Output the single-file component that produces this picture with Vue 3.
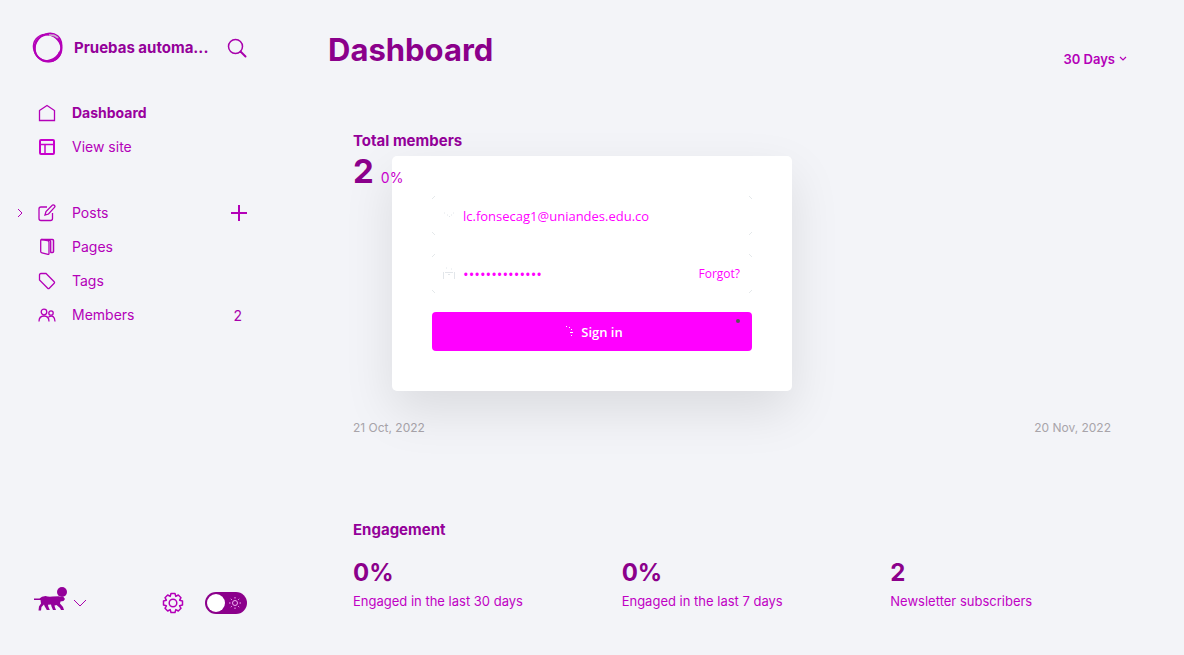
<script setup>
import { ref } from 'vue'

const email = ref('lc.fonsecag1@uniandes.edu.co')
const password = ref('contrasenia123')
const night = ref(false)

const stats = [
  { value: '0%', label: 'Engaged in the last 30 days' },
  { value: '0%', label: 'Engaged in the last 7 days' },
  { value: '2', label: 'Newsletter subscribers' },
]
</script>

<template>
  <div class="app">
    <aside class="sidebar">
      <header class="brand">
        <svg class="logo" viewBox="0 0 32 32" width="32" height="32" fill="none" stroke="#b400b8">
          <circle cx="16" cy="16" r="13.5" stroke-width="2" />
          <ellipse cx="17" cy="15.5" rx="14.5" ry="12.5" transform="rotate(-50 16 16)" stroke-width="1.5" />
          <ellipse cx="15.5" cy="16.5" rx="14.5" ry="13" transform="rotate(40 16 16)" stroke-width="1.3" />
          <path d="M28 20q-2 7-9 9" stroke-width="2.500" />
          <path d="M17 3c4-.5 7 1 9 3" stroke="#c8b4cc" stroke-width="1.500" />
        </svg>
        <span class="site">Pruebas automa...</span>
        <button class="icon-btn" type="button" aria-label="Search">
          <svg viewBox="0 0 20 20" width="20" height="20" fill="none" stroke="#a800ac" stroke-width="1.5">
            <circle cx="8.5" cy="8.5" r="7" />
            <path d="M13.5 13.5l5 5" stroke-width="2" stroke-linecap="round" />
          </svg>
        </button>
      </header>

      <nav class="nav">
        <ul>
          <li>
            <a href="#dashboard" class="active">
              <svg viewBox="0 0 18 18" width="18" height="18"><path d="M1.5 6.5L9 1.5l7.500 5v10h-15z" /></svg>
              Dashboard
            </a>
          </li>
          <li>
            <a href="#site">
              <svg viewBox="0 0 18 18" width="18" height="18" class="heavy"><rect x="2" y="2" width="14" height="14" rx="1" /><path d="M2 6.500h14M7 6v10" stroke-width="1.500" /></svg>
              View site
            </a>
          </li>
        </ul>
        <ul>
          <li>
            <svg class="expand" viewBox="0 0 6 10" width="6" height="10"><path d="M1 1l4 4-4 4" /></svg>
            <a href="#posts">
              <svg viewBox="0 0 18 18" width="18" height="18"><path d="M9 3H3a2 2 0 0 0-2 2v9.500a2 2 0 0 0 2 2h9.500a2 2 0 0 0 2-2V9M7 11l1-3.500L14.500 1q1.200-.5 2 .5t.2 1.600L10.500 10z" /></svg>
              Posts
            </a>
            <button class="icon-btn" type="button" aria-label="New post">
              <svg viewBox="0 0 16 16" width="16" height="16"><path d="M8 0v16M0 8h16" stroke-width="2" /></svg>
            </button>
          </li>
          <li>
            <a href="#pages">
              <svg viewBox="0 0 18 18" width="18" height="18"><path d="M3.500 1.500h11q1 0 1 1v11q0 1-1 1h-2" stroke-width="1.500" /><path d="M3.500 1.500l6 1.200q1.500.3 1.500 1.500v11.300q0 1-1 .8l-6-1.500q-1.300-.3-1.300-1.300v-11q0-1 .8-1zM10 1.800q2.700.3 2.700 2v11" /></svg>
              Pages
            </a>
          </li>
          <li>
            <a href="#tags">
              <svg viewBox="0 0 18 18" width="18" height="18"><path d="M1.500 3q0-1.500 1.500-1.500h5L16.200 9.700q.8.800 0 1.600l-4.900 4.900q-.8.800-1.600 0L1.500 8z" /></svg>
              Tags
            </a>
          </li>
          <li>
            <a href="#members">
              <svg viewBox="0 0 18 18" width="18" height="18"><circle cx="6" cy="6" r="2.800" /><circle cx="13" cy="7" r="2.200" /><path d="M1 15.500q0-5.500 5-5.500t5 5.500M10.500 11q6-3 6.500 4.500" /></svg>
              Members
            </a>
            <span class="count">2</span>
          </li>
        </ul>
      </nav>

      <footer class="account">
        <button class="icon-btn user" type="button" aria-label="Account">
          <svg viewBox="0 0 34 26" width="34" height="26" fill="#94009a">
            <circle cx="28" cy="6" r="5" />
            <path d="M0 12.500h5.500q2-2.500 6-2.500 3 1 7 .5l6-.3 3 .8h2l1.500 2-1.500 2-3 .5-.5 2 3 3.500 1 3h-3l-1-2-3.500-3-2 .5.500 2 1 2.500h-3l-1.500-3.500-.5-2-3 .3.300 1.700 1.500 3.500h-3L10.500 20l-.5-1.500-2.500 2.500-.5 3.500H4.500l.5-4 2-3-.5-3.500H0z" />
          </svg>
          <svg viewBox="0 0 14 9" width="14" height="9" fill="none" stroke="#a800ac"><path d="M1 1l6 6 6-6" /></svg>
        </button>
        <button class="icon-btn gear" type="button" aria-label="Settings">
          <svg viewBox="0 0 22 22" width="22" height="22" fill="none" stroke="#b400b8" stroke-width="1.500" stroke-linejoin="round">
            <path d="M9 1.500h4l.8 2.900 2.500-1.400 2.700 2.700-1.400 2.500 2.900.8v4l-2.900.8 1.400 2.500-2.700 2.700-2.500-1.400-.8 2.900H9l-.8-2.900L5.700 19 3 16.300l1.400-2.500-2.900-.8V9l2.900-.8L3 5.700 5.700 3l2.500 1.400z" />
            <circle cx="11" cy="11" r="3.800" />
          </svg>
        </button>
        <label class="toggle">
          <input v-model="night" type="checkbox" aria-label="Night shift" />
          <span class="knob"></span>
          <svg viewBox="0 0 12 12" width="12" height="12" fill="none" stroke="#efb0f2">
            <circle cx="6" cy="6" r="2.500" />
            <path d="M6 0v1.500M6 10.500V12M0 6h1.500M10.500 6H12M1.800 1.800l1 1M9.200 9.200l1 1M1.800 10.200l1-1M9.200 2.800l1-1" />
          </svg>
        </label>
      </footer>
    </aside>

    <main class="main">
      <header class="top">
        <h1>Dashboard</h1>
        <button class="period" type="button">
          30 Days
          <svg viewBox="0 0 8 6" width="8" height="6" fill="none" stroke="#b400b8" stroke-width="1.200"><path d="M1 1l3 3 3-3" /></svg>
        </button>
      </header>

      <section class="members">
        <h2>Total members</h2>
        <p class="total"><strong>2</strong><span>0%</span></p>
        <div class="chart"></div>
        <div class="dates"><span>21 Oct, 2022</span><span>20 Nov, 2022</span></div>
      </section>

      <section class="engagement">
        <h2>Engagement</h2>
        <div class="stats">
          <div v-for="s in stats" :key="s.label">
            <strong>{{ s.value }}</strong>
            <p>{{ s.label }}</p>
          </div>
        </div>
      </section>
    </main>

    <form class="signin" @submit.prevent>
      <div class="field">
        <svg viewBox="0 0 14 14" width="14" height="14"><path d="M2 4h1M7 7.500h1M11 4h1M5 6h1M9 6h1" /></svg>
        <input v-model="email" type="email" aria-label="Email address" />
      </div>
      <div class="field">
        <svg viewBox="0 0 14 14" width="14" height="14"><path d="M1.500 5v7M12.500 5v7M3 5.500h8M6 7.500h2M4 1h1M9 2h1" /></svg>
        <input v-model="password" class="secret" type="password" aria-label="Password" />
        <button class="forgot" type="button">Forgot?</button>
      </div>
      <button class="submit" type="submit">
        <svg class="spinner" viewBox="0 0 10 12" width="10" height="12" fill="none" stroke="#fff"><path d="M3 .5h1M6 1.500h1M8 3.500h1M7 6.500h3M8 9.500h1" /></svg>
        Sign in
        <span class="dot"></span>
      </button>
    </form>
  </div>
</template>

<style>
body {
  background: #f3f4f8;
}
</style>

<style scoped>
* {
  box-sizing: border-box;
}

.app {
  position: relative;
  display: flex;
  min-height: 100vh;
  overflow: hidden;
  background: #f3f4f8;
  color: #a800ac;
  font-family: Inter, "Liberation Sans", sans-serif;
  font-size: 14px;
}

h1, h2, p, ul {
  margin: 0;
  padding: 0;
}

ul {
  list-style: none;
}

button {
  padding: 0;
  border: 0;
  background: none;
  color: inherit;
  font: inherit;
  cursor: pointer;
}

.icon-btn {
  display: flex;
  align-items: center;
}

.sidebar {
  display: flex;
  flex: 0 0 280px;
  flex-direction: column;
  padding: 32px 32px 35px;
}

.brand {
  display: flex;
  align-items: center;
  gap: 10px;
  height: 32px;
}

.logo {
  flex: none;
}

.site {
  color: #94009a;
  font-size: 15px;
  font-weight: 700;
  line-height: 18px;
  white-space: nowrap;
}

.brand .icon-btn {
  margin-left: auto;
  padding-right: 1px;
}

.nav {
  display: flex;
  flex-direction: column;
  gap: 32px;
  padding-top: 32px;
}

.nav li {
  position: relative;
  display: flex;
  align-items: center;
  height: 34px;
  padding: 0 1px 0 6px;
}

.nav a {
  display: flex;
  flex: 1;
  align-items: center;
  gap: 16px;
  color: #b400b8;
  line-height: 20px;
  text-decoration: none;
}

.nav a.active {
  color: #9a009e;
  font-weight: 700;
}

.nav svg {
  fill: none;
  stroke: #b400b8;
  stroke-width: 1.3;
}

.nav .heavy {
  stroke: #c800cc;
  stroke-width: 2;
}

.nav .expand {
  position: absolute;
  left: -15px;
  stroke-width: 1;
}

.count {
  padding-right: 5px;
}

.account {
  display: flex;
  align-items: center;
  margin-top: auto;
  padding-left: 2px;
}

.user {
  gap: 5px;
}

.user svg:first-child {
  margin-bottom: 8px;
}

.gear {
  margin-left: auto;
}

.toggle {
  position: relative;
  display: flex;
  align-items: center;
  justify-content: space-between;
  width: 42px;
  height: 22px;
  margin: 0 1px 0 21px;
  padding: 0 6px 0 2px;
  border-radius: 11px;
  background: #8b008b;
}

.toggle input {
  position: absolute;
  inset: 0;
  margin: 0;
  opacity: 0;
}

.knob {
  width: 18px;
  height: 18px;
  border-radius: 50%;
  background: #fff;
}

.main {
  flex: 1;
  padding: 26px 48px 40px;
}

.top {
  display: flex;
  align-items: center;
  justify-content: space-between;
  height: 48px;
  padding-right: 9px;
}

h1 {
  color: #8b008b;
  font-size: 31px;
  font-weight: 700;
  line-height: 48px;
}

.period {
  display: flex;
  align-items: center;
  gap: 4px;
  padding-top: 18px;
  color: #b400b8;
  font-size: 13px;
  font-weight: 600;
}

.members {
  padding: 56px 25px 0;
}

h2 {
  color: #94009a;
  font-size: 15px;
  font-weight: 700;
  line-height: 22px;
}

.total {
  position: relative;
  z-index: 2;
  display: flex;
  align-items: baseline;
  gap: 7px;
  line-height: 38px;
}

.total strong {
  color: #8b008b;
  font-size: 33px;
}

.total span {
  color: #c800cc;
  font-size: 14px;
}

.chart {
  height: 221px;
}

.dates {
  display: flex;
  justify-content: space-between;
  color: #a8a4aa;
  font-size: 12px;
  line-height: 20px;
}

.engagement {
  padding: 81px 25px 0;
}

.stats {
  display: grid;
  grid-template-columns: repeat(3, 1fr);
  gap: 48px;
  padding-top: 16px;
}

.stats strong {
  display: block;
  color: #8b008b;
  font-size: 24px;
  line-height: 32px;
}

.stats p {
  color: #c000c4;
  font-size: 13px;
  line-height: 24px;
}

.signin {
  position: absolute;
  top: 156px;
  left: 50%;
  z-index: 1;
  display: flex;
  flex-direction: column;
  gap: 19px;
  width: 400px;
  margin-left: -200px;
  padding: 40px;
  border-radius: 5px;
  background: #fff;
  box-shadow: 0 20px 50px rgba(0, 0, 0, 0.1);
  font-family: "Open Sans", "Noto Sans", sans-serif;
}

.field {
  display: flex;
  align-items: center;
  gap: 7px;
  height: 39px;
  padding: 0 12px 0 10px;
  background-image:
    linear-gradient(135deg, transparent 40%, #e4e8ea 40%, #e4e8ea 60%, transparent 60%),
    linear-gradient(45deg, transparent 40%, #e4e8ea 40%, #e4e8ea 60%, transparent 60%),
    linear-gradient(45deg, transparent 40%, #e4e8ea 40%, #e4e8ea 60%, transparent 60%),
    linear-gradient(135deg, transparent 40%, #e4e8ea 40%, #e4e8ea 60%, transparent 60%);
  background-position: left top, right top, left bottom, right bottom;
  background-repeat: no-repeat;
  background-size: 3px 3px;
}

.field svg {
  flex: none;
  fill: none;
  stroke: #e2e6ea;
}

.field input {
  flex: 1;
  min-width: 0;
  padding: 0;
  border: 0;
  outline: 0;
  background: none;
  color: #f0f;
  font-family: inherit;
  font-size: 13px;
}

.field .secret {
  font-size: 15px;
}

.forgot {
  color: #f0f;
  font-size: 12px;
  font-weight: 400;
}

.submit {
  position: relative;
  display: flex;
  align-items: center;
  justify-content: center;
  gap: 8px;
  height: 39px;
  padding-left: 2px;
  border-radius: 4px;
  background: #f0f;
  color: #fff;
  font-size: 13px;
  font-weight: 600;
}

.dot {
  position: absolute;
  top: 7px;
  right: 12px;
  width: 4px;
  height: 4px;
  border-radius: 50%;
  background: #555;
}
</style>
